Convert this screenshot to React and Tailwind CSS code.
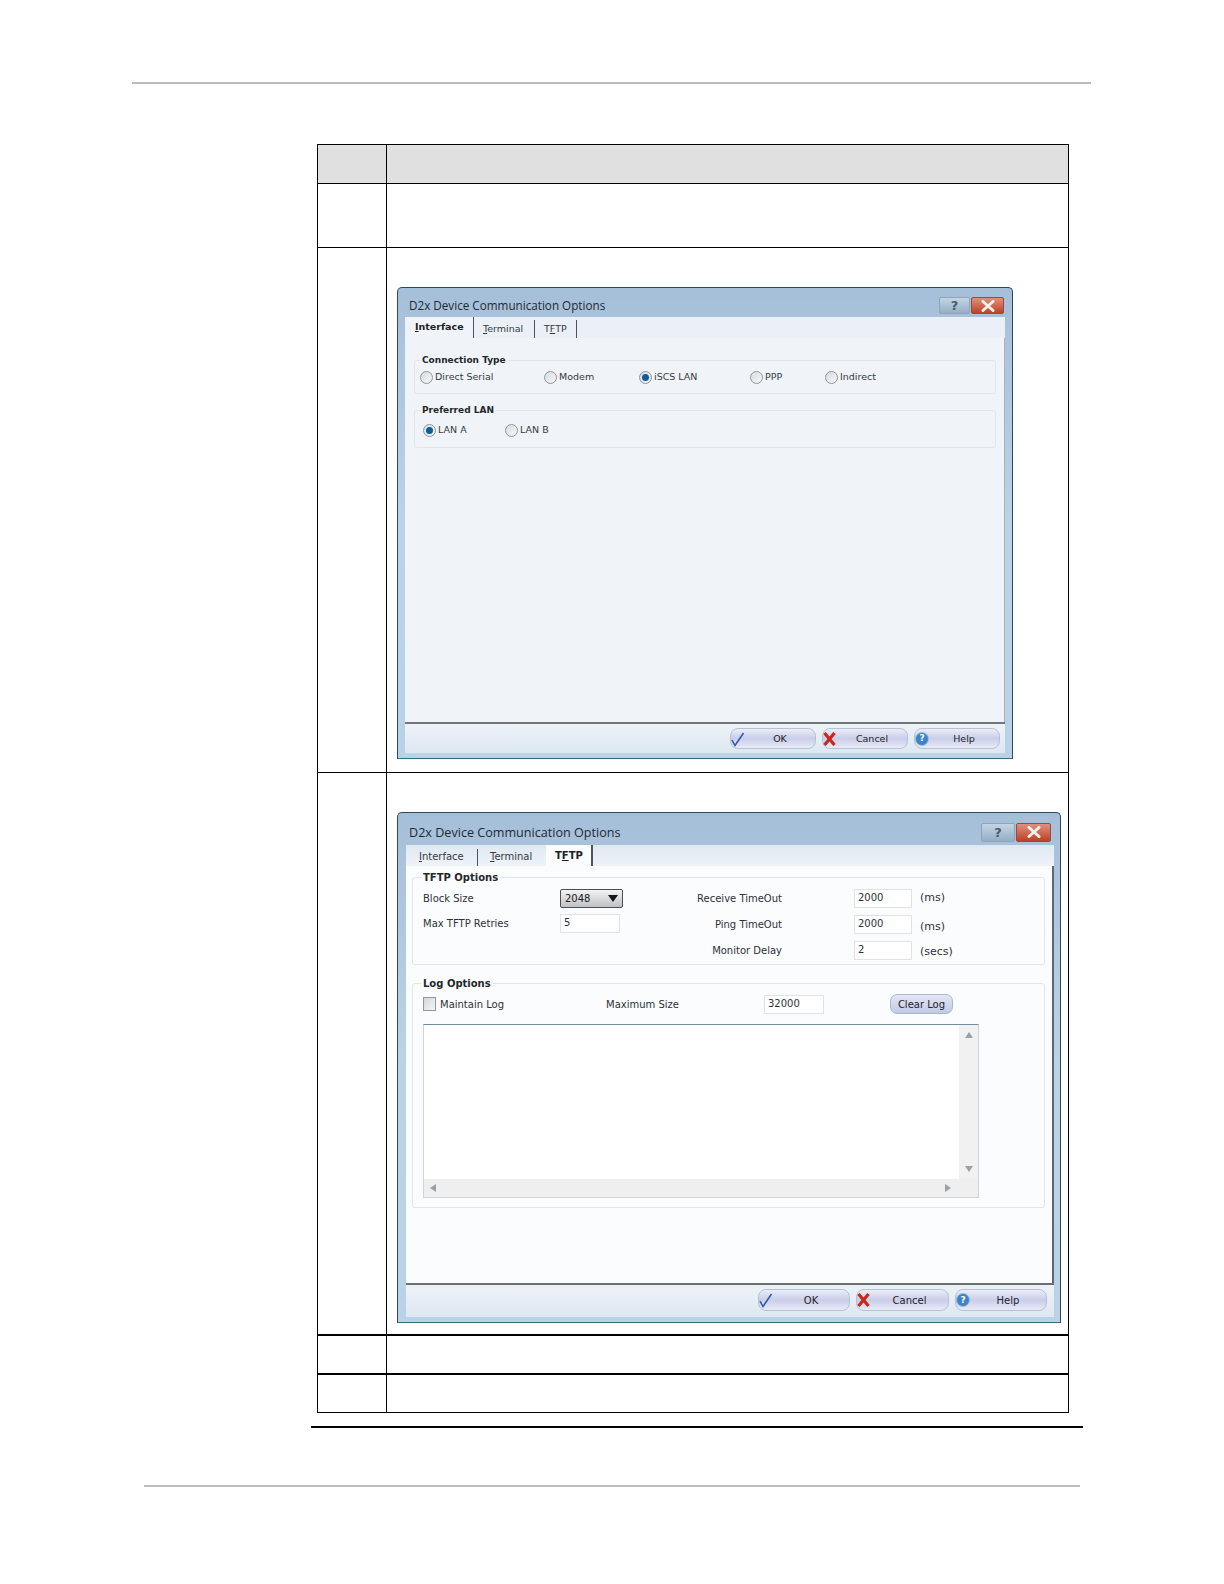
const uiFont = "font-['DejaVu_Sans',sans-serif]";

const QuestionGlyph = () => <span className="font-['DejaVu_Sans',sans-serif] text-[13px] font-bold leading-none text-[#4a5a68]">?</span>;

const CloseGlyph = () => (
  <svg viewBox="0 0 14 12" className="w-[14px] h-[12px]">
    <path d="M2 1.5 L12 10.5 M12 1.5 L2 10.5" stroke="#f4f0ee" strokeWidth="3" strokeLinecap="round" />
  </svg>
);

const CheckIcon = () => (
  <svg viewBox="0 0 14 16" className="w-[14px] h-[16px] shrink-0">
    <path d="M1 9 L4 14.5 L12.5 2" fill="none" stroke="#2b56b8" strokeWidth="1.5" />
  </svg>
);

const CancelIcon = () => (
  <svg viewBox="0 0 14 14" className="w-[14px] h-[14px] shrink-0">
    <path d="M1.5 1 L11.5 13 M11.5 1 L1.5 13" stroke="#c8281a" strokeWidth="3.2" />
  </svg>
);

const HelpIcon = () => (
  <div className="w-[14px] h-[14px] shrink-0 rounded-full border border-[#9cc0e2] bg-[#3f83c6] flex items-center justify-center text-white text-[9px] font-bold leading-none">?</div>
);

function FooterButton({ icon, label, className }) {
  return (
    <div className={`flex items-center rounded-[8px] border border-[#b4c3d4] bg-linear-to-b from-[#eceef8] via-[#c9cde8] to-[#e9ebf7] text-[#20242a] ${className}`}>
      {icon}
      <span className="flex-1 text-center">{label}</span>
    </div>
  );
}

function Radio({ label, checked, className }) {
  return (
    <div className={`flex items-center gap-[2px] h-[14px] text-[#333b42] ${className}`}>
      <div className="w-[13px] h-[13px] shrink-0 rounded-full border border-[#8e979c] bg-linear-to-br from-[#d8dcdf] to-[#f6f7f8] flex items-center justify-center">
        {checked && <div className="w-[7px] h-[7px] rounded-full bg-[#0b5f96]" />}
      </div>
      <span>{label}</span>
    </div>
  );
}

function Group({ title, legendClass, className, children }) {
  return (
    <div className={`relative border border-[#dfe5ea] rounded-[3px] ${className}`}>
      <span className={`absolute px-[2px] leading-[12px] font-bold text-[#23282d] ${legendClass}`}>{title}</span>
      {children}
    </div>
  );
}

function Field({ value, className }) {
  return <div className={`border border-[#dde3e8] bg-white pl-[3px] leading-[16px] text-[#2c3238] ${className}`}>{value}</div>;
}

function Dialog({ title, titleClass, barClass, capsClass, helpClass, closeClass, frameClass, tabs, footer, children }) {
  return (
    <div className={`flex flex-col rounded-t-[5px] border border-[#2c4a5c] border-b-[#2f6f80] bg-linear-to-b from-[#a6bfd9] via-[#bcd2e6] to-[#b9d2e7] pb-[5px] ${uiFont} ${frameClass}`}>
      <div className={`flex items-center justify-between shrink-0 ${barClass}`}>
        <span className={`font-['Open_Sans',sans-serif] text-[#1e2a33] ${titleClass}`}>{title}</span>
        <div className={`flex gap-[1px] ${capsClass}`}>
          <div className={`flex items-center justify-center rounded-[2px] border border-[#8ea5b8] bg-linear-to-b from-[#c4d5e3] to-[#94afc6] ${helpClass}`}><QuestionGlyph /></div>
          <div className={`flex items-center justify-center rounded-[2px] border border-[#9a4a3c] bg-linear-to-b from-[#e0907c] to-[#bd3f26] ${closeClass}`}><CloseGlyph /></div>
        </div>
      </div>
      {tabs}
      {children}
      {footer}
    </div>
  );
}

function InterfaceDialog() {
  const tabs = (
    <div className="flex h-[21px] shrink-0 bg-[#eaf0f6] text-[9.5px] text-[#333b42]">
      <div className="w-[69px] pl-[10px] pt-[3px] font-bold text-[#1c2126] bg-[#f0f4f8] border-r border-[#4d5358]"><u>I</u>nterface</div>
      <div className="w-[61px] pl-[9px] pt-[3px] mt-[3px] border-r border-[#4d5358] leading-[12px]"><u>T</u>erminal</div>
      <div className="w-[42px] pl-[9px] pt-[3px] mt-[3px] border-r border-[#4d5358] leading-[12px]">T<u>F</u>TP</div>
    </div>
  );

  const footer = (
    <div className="flex justify-end gap-[6px] h-[31px] shrink-0 pt-[4px] pr-[5px] bg-linear-to-b from-[#eef2f7] to-[#dde8f2] border-t-2 border-[#72777b] text-[9.5px] leading-[20px]">
      <FooterButton label="OK" icon={<CheckIcon />} className="w-[86px] h-[21px]" />
      <FooterButton label="Cancel" icon={<CancelIcon />} className="w-[86px] h-[21px]" />
      <FooterButton label="Help" icon={<HelpIcon />} className="w-[86px] h-[21px]" />
    </div>
  );

  return (
    <Dialog
      title="D2x Device Communication Options"
      titleClass="text-[11.7px] mt-[6px]"
      barClass="h-[29px] pl-[11px] pr-[8px]"
      capsClass="mt-[6px]"
      helpClass="w-[31px] h-[17px]"
      closeClass="w-[33px] h-[17px]"
      frameClass="w-[616px] h-[472px] mt-[39px] ml-[10px]"
      tabs={<div className="mx-[7px]">{tabs}</div>}
      footer={<div className="mx-[7px]">{footer}</div>}
    >
      <div className="mx-[7px] flex-1 flex flex-col gap-[16px] pt-[22px] pl-[9px] bg-[#f0f4f8] border-r border-[#a9b2ba] text-[9.5px]">
        <Group title="Connection Type" legendClass="left-[5px] top-[-7px] text-[9px] bg-[#f0f4f8]" className="w-[582px] h-[34px]">
          <div className="flex pt-[9px] pl-[5px]">
            <Radio label="Direct Serial" className="w-[124px]" />
            <Radio label="Modem" className="w-[95px]" />
            <Radio label="iSCS LAN" checked className="w-[111px]" />
            <Radio label="PPP" className="w-[75px]" />
            <Radio label="Indirect" />
          </div>
        </Group>
        <Group title="Preferred LAN" legendClass="left-[5px] top-[-7px] text-[9px] bg-[#f0f4f8]" className="w-[582px] h-[38px]">
          <div className="flex pt-[12px] pl-[8px]">
            <Radio label="LAN A" checked className="w-[82px]" />
            <Radio label="LAN B" />
          </div>
        </Group>
      </div>
    </Dialog>
  );
}

const ScrollArrow = ({ points, className }) => (
  <svg viewBox="0 0 8 8" className={`w-[8px] h-[8px] ${className}`}>
    <polygon points={points} fill="#9aa2a8" />
  </svg>
);

function LogBox() {
  return (
    <div className="mt-[10px] ml-[10px] w-[556px] h-[174px] flex flex-col border border-[#c9d4dc] border-t-[#6f8ea0] bg-white">
      <div className="flex flex-1">
        <div className="flex-1" />
        <div className="w-[19px] flex flex-col items-center justify-between py-[6px] bg-[#f1f1f1]">
          <ScrollArrow points="4,1 8,7 0,7" />
          <ScrollArrow points="0,1 8,1 4,7" />
        </div>
      </div>
      <div className="h-[18px] flex items-center justify-between px-[5px] pr-[26px] bg-[#efefef]">
        <ScrollArrow points="7,0 7,8 1,4" />
        <ScrollArrow points="1,0 1,8 7,4" />
      </div>
    </div>
  );
}

function TftpDialog() {
  const tabs = (
    <div className="flex h-[21px] shrink-0 bg-linear-to-b from-[#dfe8f1] to-[#eef3f8] text-[#333b42]">
      <div className="w-[72px] pl-[13px] pt-[2px] mt-[4px] border-r border-[#4d5358] leading-[12px]"><u>I</u>nterface</div>
      <div className="w-[68px] pl-[12px] pt-[2px] mt-[4px] leading-[12px]"><u>T</u>erminal</div>
      <div className="w-[47px] pl-[9px] pt-[3px] font-bold text-[#1c2126] bg-[#fbfcfd] border-r-2 border-[#4d5358]">T<u>F</u>TP</div>
    </div>
  );

  const footer = (
    <div className="flex justify-end gap-[6px] h-[34px] shrink-0 pt-[4px] pr-[7px] bg-linear-to-b from-[#eef2f7] to-[#dde8f2] border-t-2 border-[#6a7074] leading-[21px]">
      <FooterButton label="OK" icon={<CheckIcon />} className="w-[92px] h-[22px]" />
      <FooterButton label="Cancel" icon={<CancelIcon />} className="w-[93px] h-[22px]" />
      <FooterButton label="Help" icon={<HelpIcon />} className="w-[92px] h-[22px]" />
    </div>
  );

  return (
    <Dialog
      title="D2x Device Communication Options"
      titleClass="text-[12.6px] mt-[8px]"
      barClass="h-[32px] pl-[11px] pr-[9px]"
      capsClass="mt-[6px]"
      helpClass="w-[34px] h-[19px]"
      closeClass="w-[35px] h-[19px]"
      frameClass="w-[664px] h-[511px] mt-[39px] ml-[10px] text-[10px]"
      tabs={<div className="ml-[8px] mr-[6px]">{tabs}</div>}
      footer={<div className="ml-[8px] mr-[6px]">{footer}</div>}
    >
      <div className="ml-[8px] mr-[6px] flex-1 flex flex-col gap-[18px] pt-[11px] pl-[6px] bg-[#fbfcfd] border-r-2 border-[#5a6a72] text-[#2c3238]">
        <Group title="TFTP Options" legendClass="left-[8px] top-[-6px] text-[10px] bg-[#fbfcfd]" className="w-[633px] h-[88px]">
          <div className="flex pt-[11px] pl-[10px]">
            <div className="w-[269px] flex flex-col gap-[6px]">
              <div className="flex items-center h-[19px]">
                <span className="w-[137px]">Block Size</span>
                <div className="w-[63px] h-[19px] flex items-center justify-between px-[4px] rounded-[2px] border border-[#4a4f53] bg-linear-to-b from-[#f4f4f4] to-[#bfc1c3] text-[#1c2126]">
                  2048
                  <svg viewBox="0 0 10 7" className="w-[10px] h-[7px]"><polygon points="0,0 10,0 5,7" fill="#16191c" /></svg>
                </div>
              </div>
              <div className="flex items-center h-[19px]">
                <span className="w-[137px]">Max TFTP Retries</span>
                <Field value="5" className="w-[60px] h-[19px]" />
              </div>
            </div>
            <div className="flex flex-col gap-[7px]">
              <div className="flex items-center h-[19px]">
                <span className="w-[90px] whitespace-nowrap text-right mr-[72px]">Receive TimeOut</span>
                <Field value="2000" className="w-[58px] h-[19px]" />
                <span className="ml-[8px] text-[11px]">(ms)</span>
              </div>
              <div className="flex items-center h-[19px]">
                <span className="w-[90px] whitespace-nowrap text-right mr-[72px]">Ping TimeOut</span>
                <Field value="2000" className="w-[58px] h-[19px]" />
                <span className="ml-[8px] mt-[5px] text-[11px]">(ms)</span>
              </div>
              <div className="flex items-center h-[19px]">
                <span className="w-[90px] whitespace-nowrap text-right mr-[72px]">Monitor Delay</span>
                <Field value="2" className="w-[58px] h-[19px]" />
                <span className="ml-[8px] mt-[3px] text-[11px]">(secs)</span>
              </div>
            </div>
          </div>
        </Group>
        <Group title="Log Options" legendClass="left-[8px] top-[-6px] text-[10px] bg-[#fbfcfd]" className="w-[633px] h-[225px]">
          <div className="flex items-center h-[20px] mt-[10px] ml-[10px]">
            <div className="w-[13px] h-[14px] border border-[#8e979c] bg-linear-to-br from-[#d4d7da] to-[#f4f5f6]" />
            <span className="w-[170px] pl-[4px]">Maintain Log</span>
            <span className="w-[158px]">Maximum Size</span>
            <Field value="32000" className="w-[60px] h-[19px]" />
            <div className="w-[63px] h-[20px] ml-[66px] flex items-center justify-center rounded-[7px] border border-[#a9b9cb] bg-linear-to-b from-[#e3e6f4] to-[#c3c9e6] text-[#20242a]">Clear Log</div>
          </div>
          <LogBox />
        </Group>
      </div>
    </Dialog>
  );
}

function Row({ className, children }) {
  return (
    <div className={`flex ${className}`}>
      <div className="w-[69px] shrink-0 border-r border-black" />
      <div className="flex-1">{children}</div>
    </div>
  );
}

export default function App() {
  return (
    <div className="w-[1224px] h-[1584px] bg-white pt-[82px]">
      <div className="ml-[132px] w-[959px] h-[2px] bg-[#bdbdbd]" />
      <div className="ml-[317px] mt-[60px] w-[752px] border-x border-b border-black">
        <Row className="h-[39px] border-t border-black bg-[#e0e0e0]" />
        <Row className="h-[64px] border-t border-black" />
        <Row className="h-[525px] border-t border-black"><InterfaceDialog /></Row>
        <Row className="h-[562px] border-t border-black"><TftpDialog /></Row>
        <Row className="h-[39px] border-t-2 border-black" />
        <Row className="h-[39px] border-t-2 border-black" />
      </div>
      <div className="ml-[311px] mt-[13px] w-[772px] h-[2px] bg-black" />
      <div className="ml-[144px] mt-[57px] w-[936px] h-[2px] bg-[#bdbdbd]" />
    </div>
  );
}
